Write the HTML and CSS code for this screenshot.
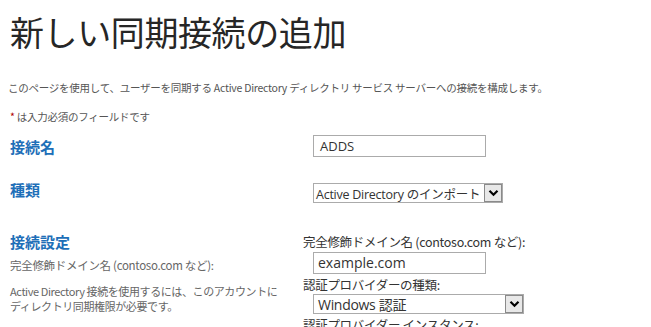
FILE: index.html
```html
<!DOCTYPE html>
<html lang="ja">

<head>
  <meta charset="UTF-8">
  <meta name="viewport" content="width=device-width, initial-scale=1.0">
  <title>新しい同期接続の追加</title>
  <link rel="stylesheet" href="styles.css">
</head>

<body>
  <div id="page">
    <h1 class="page-title">新しい同期接続の追加</h1>

    <p class="intro">このページを使用して、ユーザーを同期する Active Directory ディレクトリ サービス サーバーへの接続を構成します。</p>
    <p class="required-note"><span class="star">*</span> は入力必須のフィールドです</p>

    <div class="form-table">
      <!-- 接続名 -->
      <div class="form-row row-name">
        <div class="label-cell">
          <h3 class="section-title">接続名</h3>
        </div>
        <div class="control-cell">
          <div class="text-box box-name">ADDS</div>
        </div>
      </div>

      <!-- 種類 -->
      <div class="form-row row-type">
        <div class="label-cell">
          <h3 class="section-title">種類</h3>
        </div>
        <div class="control-cell">
          <div class="select-box box-type">
            <span class="select-value">Active Directory のインポート</span>
            <span class="select-arrow">
              <svg width="11" height="8" viewBox="0 0 11 8"><path d="M1.5 1.8 L5.5 5.8 L9.5 1.8" fill="none" stroke="#000" stroke-width="2.2"/></svg>
            </span>
          </div>
        </div>
      </div>

      <!-- 接続設定 -->
      <div class="form-row row-settings">
        <div class="label-cell">
          <h3 class="section-title">接続設定</h3>
          <p class="desc">完全修飾ドメイン名 (contoso.com など):</p>
          <p class="desc desc-note">Active Directory 接続を使用するには、このアカウントに<br>ディレクトリ同期権限が必要です。</p>
        </div>
        <div class="control-cell">
          <label class="field-label">完全修飾ドメイン名 (contoso.com など):</label>
          <div class="text-box box-domain">example.com</div>
          <label class="field-label">認証プロバイダーの種類:</label>
          <div class="select-box box-auth">
            <span class="select-value">Windows 認証</span>
            <span class="select-arrow">
              <svg width="11" height="8" viewBox="0 0 11 8"><path d="M1.5 1.8 L5.5 5.8 L9.5 1.8" fill="none" stroke="#000" stroke-width="2.2"/></svg>
            </span>
          </div>
          <label class="field-label">認証プロバイダー インスタンス:</label>
        </div>
      </div>
    </div>
  </div>
</body>

</html>
```

FILE: styles.css
```css
body {
  margin: 0;
  background: #fff;
  font-family: "Open Sans", "Noto Sans CJK JP", sans-serif;
  color: #444;
  overflow: hidden;
}

#page {
  padding: 0 10px;
}

.page-title {
  margin: 0;
  padding-top: 10px;
  font-size: 34px;
  line-height: 44px;
  font-weight: normal;
  color: #262626;
  font-family: "Noto Sans CJK JP", sans-serif;
  letter-spacing: -0.4px;
}

.intro {
  margin: 26px 0 0 -2px;
  font-size: 10.5px;
  line-height: 16px;
  color: #555;
  font-family: "Noto Sans CJK JP", sans-serif;
  letter-spacing: -0.25px;
}

.required-note {
  margin: 13px 0 0;
  font-size: 10.5px;
  line-height: 16px;
  color: #555;
  font-family: "Noto Sans CJK JP", sans-serif;
  letter-spacing: -0.25px;
}

.star {
  color: #b00000;
}

.form-row {
  display: grid;
  grid-template-columns: 293px 1fr;
}

.section-title {
  margin: 0;
  font-size: 15px;
  line-height: 20px;
  font-weight: bold;
  color: #1e6fb8;
  font-family: "Noto Sans CJK JP", sans-serif;
}

.row-name {
  height: 55px;
}

.row-name .label-cell {
  padding-top: 12px;
}

.row-name .control-cell {
  padding-top: 10px;
}

.row-type {
  height: 50px;
}

.row-type .control-cell {
  padding-top: 3px;
}

.text-box {
  box-sizing: border-box;
  width: 173px;
  height: 22px;
  margin-left: 10px;
  padding: 0 6px;
  border: 1px solid #ababab;
  font-size: 13px;
  line-height: 20px;
  color: #333;
  font-family: "Open Sans", sans-serif;
}

.select-box {
  box-sizing: border-box;
  display: flex;
  align-items: center;
  margin-left: 10px;
  height: 20px;
  border: 1px solid #ababab;
  font-size: 13px;
  color: #333;
  font-family: "Open Sans", "Noto Sans CJK JP", sans-serif;
}

.select-value {
  flex: 1;
  padding-left: 2px;
  white-space: nowrap;
  overflow: hidden;
  letter-spacing: -0.3px;
}

.select-arrow {
  display: flex;
  align-items: center;
  justify-content: center;
  flex: none;
  width: 18px;
  height: 18px;
  background: #e8e8e8;
  border: 1px solid #8a8a8a;
  box-sizing: border-box;
}

.box-type {
  width: 190px;
}

.box-type .select-value {
  font-size: 12.5px;
  letter-spacing: -0.25px;
}

.row-settings .label-cell {
  padding-top: 2px;
}

.row-settings .control-cell {
  padding-top: 4px;
}

.desc {
  margin: 6px 0 0;
  font-size: 11.5px;
  line-height: 14px;
  color: #666;
  font-family: "Noto Sans CJK JP", sans-serif;
  letter-spacing: -0.3px;
  white-space: nowrap;
}

.desc-note {
  margin-top: 12px;
  font-size: 11px;
  line-height: 15px;
  letter-spacing: -0.4px;
}

.field-label {
  display: block;
  font-size: 12.5px;
  line-height: 16px;
  color: #333;
  font-family: "Noto Sans CJK JP", sans-serif;
  letter-spacing: -0.3px;
  white-space: nowrap;
}

.box-domain {
  margin-top: 2px;
  margin-bottom: 3px;
  padding-left: 4px;
  font-size: 14px;
}

.box-auth {
  width: 211px;
  margin-top: 1px;
  margin-bottom: 3px;
  padding-left: 2px;
  font-size: 14px;
}
```
